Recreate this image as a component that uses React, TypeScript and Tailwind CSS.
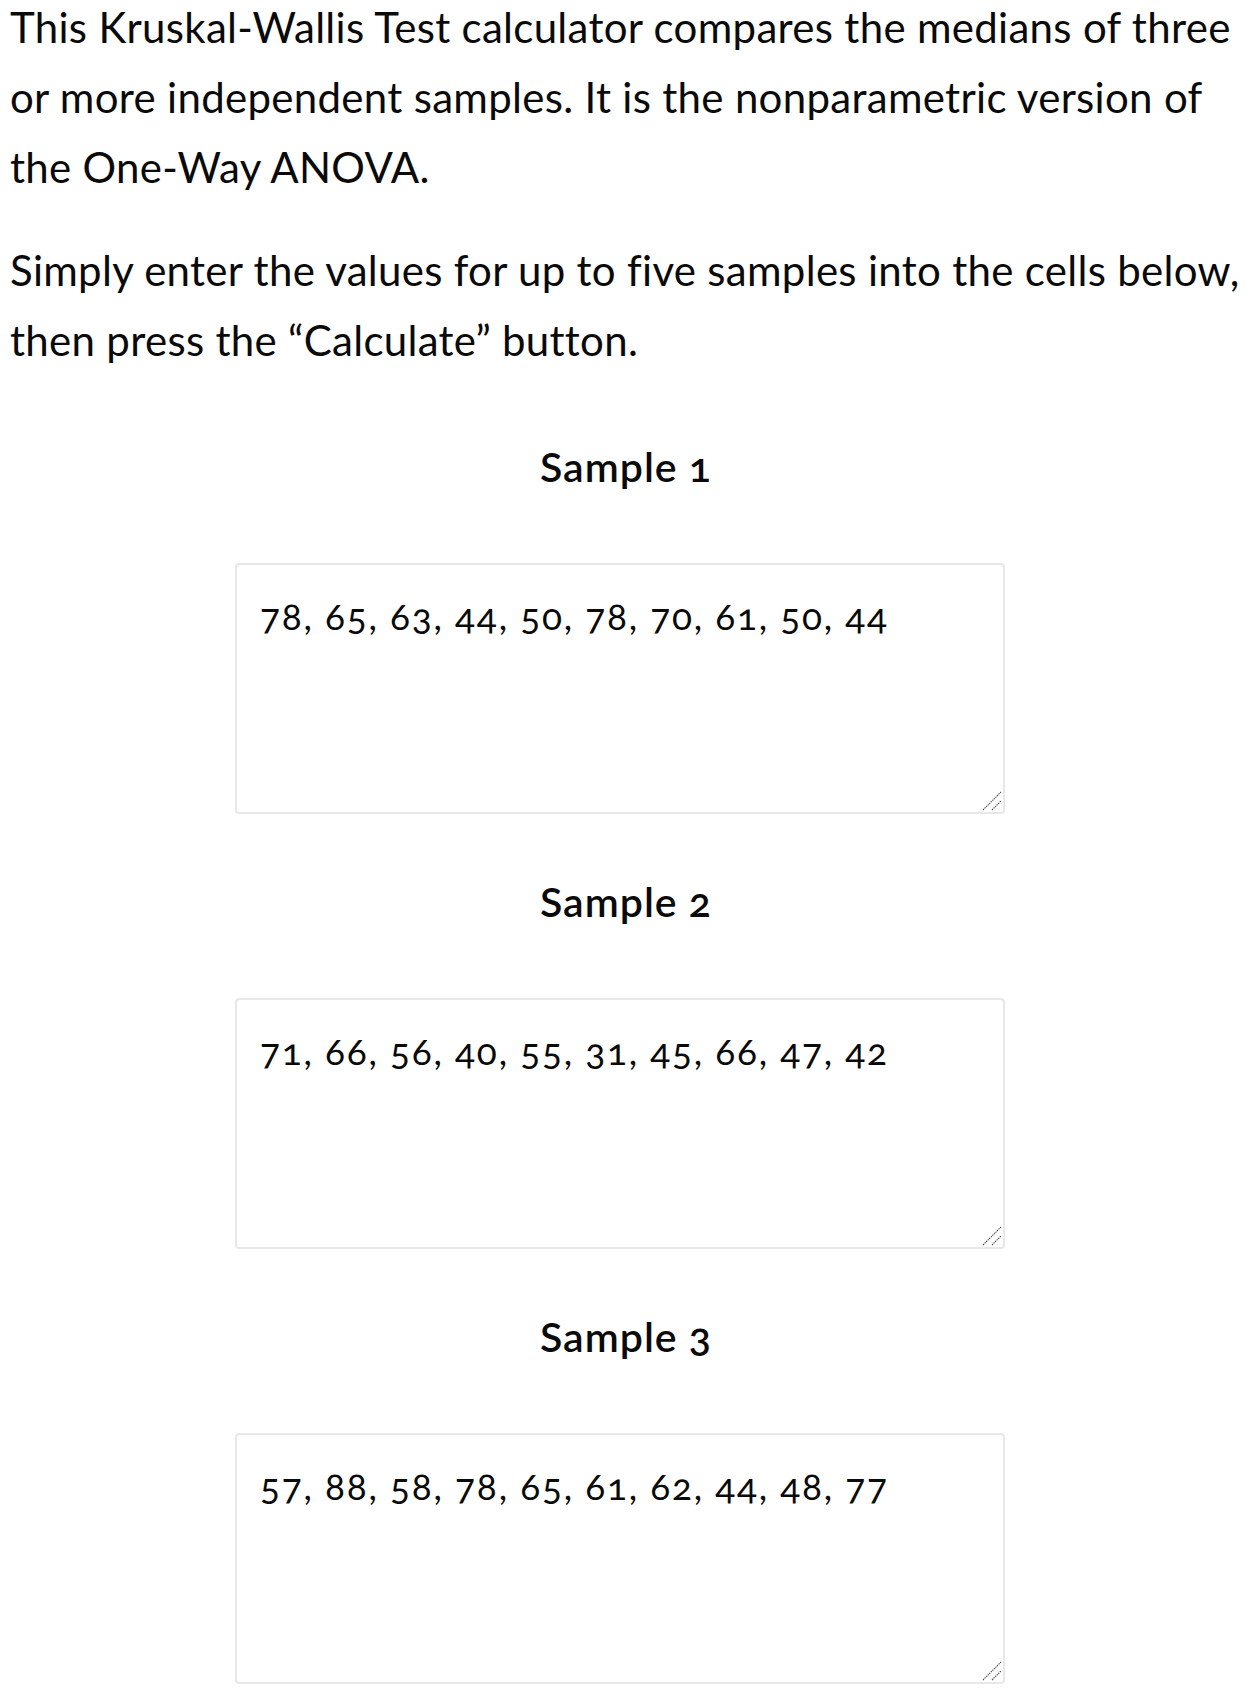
import { useState } from 'react';

// ─── Data ────────────────────────────────────────────────────────────────────

const initialSamples = [
  '78, 65, 63, 44, 50, 78, 70, 61, 50, 44',
  '71, 66, 56, 40, 55, 31, 45, 66, 47, 42',
  '57, 88, 58, 78, 65, 61, 62, 44, 48, 77',
];

const font = { fontFamily: 'Lato, "Open Sans", "Liberation Sans", sans-serif' };

// Resize grip drawn over the textarea corner
function Grip() {
  return (
    <svg
      className="absolute right-[3px] bottom-[3px] pointer-events-none"
      width="20"
      height="20"
      viewBox="0 0 20 20"
    >
      <path d="M1 19 L19 1" stroke="#4a4a4a" strokeWidth="1.1" strokeDasharray="1.4 0.8" />
      <path d="M10 19 L19 10" stroke="#4a4a4a" strokeWidth="1.1" strokeDasharray="1.4 0.8" />
    </svg>
  );
}

// ─── Component ───────────────────────────────────────────────────────────────

export default function App() {
  const [samples, setSamples] = useState(initialSamples);

  const update = (idx: number, value: string) => {
    setSamples(prev => prev.map((s, i) => (i === idx ? value : s)));
  };

  return (
    <div className="min-h-screen bg-white text-[#0a0a0a] pl-[10px] pr-[10px] overflow-hidden" style={font}>
      {/* Intro */}
      <p className="-mt-[8px] mb-[33px] text-[42px] leading-[70px] tracking-[0.3px] whitespace-nowrap">
        This Kruskal-Wallis Test calculator compares the medians of three
        <br />
        or more independent samples. It is the nonparametric version of
        <br />
        the One-Way ANOVA.
      </p>
      <p className="text-[42px] leading-[70px] tracking-[0.3px] whitespace-nowrap">
        Simply enter the values for up to five samples into the cells below,
        <br />
        then press the “Calculate” button.
      </p>

      {/* Sample inputs */}
      <div className="ml-[225px] w-[770px] pt-[68px]">
        {samples.map((s, i) => (
          <div key={i} className={i > 0 ? 'mt-[64px]' : ''}>
            <h3 className="pl-[12px] text-center text-[41px] leading-[48px] font-semibold tracking-[1px] oldstyle-nums mb-[72px]">
              Sample {i + 1}
            </h3>
            <div className="relative">
              <textarea
                value={s}
                onChange={e => update(i, e.target.value)}
                className="block w-full h-[251px] resize-none border-2 border-[#e8e8e8] rounded-[4px] bg-white px-[23px] pt-[29px] pb-[20px] text-[37px] leading-[1.2] tracking-[1.8px] oldstyle-nums outline-none"
                style={font}
              />
              <Grip />
            </div>
          </div>
        ))}
      </div>
    </div>
  );
}
